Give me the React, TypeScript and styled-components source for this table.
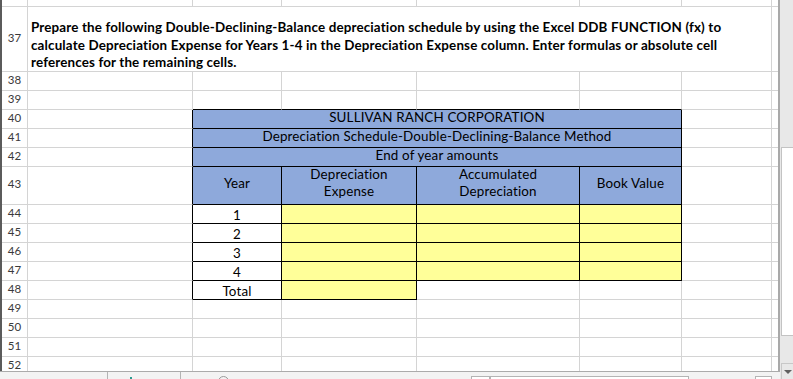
import React from 'react';
import styled, { createGlobalStyle } from 'styled-components';

const GlobalStyle = createGlobalStyle`
  html, body { margin: 0; padding: 0; background: #fff; overflow: hidden; }
  body { font-family: Lato, "Liberation Sans", sans-serif; color: #000; }
  * { box-sizing: border-box; }
`;

const GRID = '#d4d4d4';
const BLACK = '#000';
const FILLS = { blue: '#8ea9db', yellow: '#ffff99', none: '#fff' } as const;
type Fill = keyof typeof FILLS;
type VAlign = 'top' | 'center' | 'bottom';

const Window = styled.div`
  display: flex;
  width: 793px;
  height: 379px;
  overflow: hidden;
  background: #fff;
`;

const Main = styled.div`
  display: flex;
  flex-direction: column;
  width: 780px;
  flex: none;
`;

const SheetArea = styled.div`
  display: flex;
  align-items: flex-start;
  height: 371px;
  overflow: hidden;
  flex: none;
`;

const EdgeBar = styled.div`
  width: 2px;
  height: 100%;
  flex: none;
  background: #5b5b5b;
`;

const Separator = styled.div`
  width: 2px;
  height: 100%;
  flex: none;
  background: #a9a9a9;
`;

const Sheet = styled.div`
  display: grid;
  width: 776px;
  flex: none;
  grid-template-columns: 26px 165px 89px 135px 163px 102px 90px 6px;
  grid-template-rows: 7px 65px repeat(5, 19px) 38px repeat(9, 19px);
`;

const RowHead = styled.div`
  display: flex;
  align-items: center;
  justify-content: center;
  border-right: 1px solid ${GRID};
  border-bottom: 1px solid ${GRID};
  font-size: 11.5px;
  line-height: 1.2;
  color: #3a3a3a;
  padding-bottom: 3px;
`;

const JUSTIFY: Record<VAlign, string> = { top: 'flex-start', center: 'center', bottom: 'flex-end' };

const Cell = styled.div<{
  $span: number;
  $right: string;
  $bottom: string;
  $fill: Fill;
  $left?: boolean;
  $v: VAlign;
  $pt: number;
}>`
  grid-column: span ${(p) => p.$span};
  display: flex;
  flex-direction: column;
  justify-content: ${(p) => JUSTIFY[p.$v]};
  padding: ${(p) => p.$pt}px 3px ${(p) => (p.$v === 'center' ? 5 : 0)}px;
  background: ${(p) => FILLS[p.$fill]};
  border-right: ${(p) => (p.$right === 'none' ? '0' : `1px solid ${p.$right}`)};
  border-bottom: 1px solid ${(p) => p.$bottom};
  min-width: 0;
`;

const CellText = styled.div<{ $bold?: boolean; $left?: boolean; $lh: number }>`
  display: block;
  text-align: ${(p) => (p.$left ? 'left' : 'center')};
  font-size: 13.4px;
  letter-spacing: 0.15px;
  font-weight: ${(p) => (p.$bold ? 700 : 400)};
  line-height: ${(p) => p.$lh}px;
  white-space: nowrap;
`;

const Line = styled.span`
  display: block;
`;

const BottomBar = styled.div`
  display: flex;
  height: 8px;
  flex: none;
  background: #f3f3f3;
  border-top: 1px solid #ababab;
`;

const TabBox = styled.div`
  width: 108px;
  flex: none;
  border-right: 1px solid #b4b4b4;
`;

const AddMark = styled.div`
  width: 2px;
  height: 2px;
  margin: 5px 0 0 22px;
  background: #2b9a8f;
  flex: none;
`;

const TabArea = styled.div`
  width: 299px;
  margin-left: 48px;
  flex: none;
  border-left: 1px solid #b4b4b4;
  display: flex;
`;

const Circle = styled.div`
  width: 11px;
  height: 11px;
  margin: 4px 0 0 37px;
  border: 1px solid #9a9a9a;
  border-radius: 50%;
  flex: none;
`;

const HScrollBtn = styled.div<{ $w: number; $ml: number }>`
  width: ${(p) => p.$w}px;
  margin: 4px 0 0 ${(p) => p.$ml}px;
  flex: none;
  border: 1px solid #b4b4b4;
  border-bottom: 0;
  background: #fff;
`;

const VScroll = styled.div`
  width: 13px;
  flex: none;
  background: #e8e8e8;
  display: flex;
  flex-direction: column;
  padding-top: 147px;
`;

const Thumb = styled.div`
  height: 189px;
  margin-left: 1px;
  background: #fff;
  border: 1px solid #c3c3c3;
  border-right: 0;
  flex: none;
`;

const DownBtn = styled.div`
  margin-top: auto;
  height: 16px;
  margin-left: 1px;
  border: 1px solid #c8c8c8;
  border-right: 0;
  border-bottom: 0;
  display: flex;
  align-items: center;
  justify-content: center;
`;

const Arrow = styled.div`
  width: 0;
  height: 0;
  border-left: 4px solid transparent;
  border-right: 4px solid transparent;
  border-top: 4px solid #606060;
`;

type Spec = {
  span?: number;
  lines?: string[];
  fill?: Fill;
  bold?: boolean;
  left?: boolean;
  t?: boolean;
  lh?: number;
  v?: VAlign;
  pt?: number;
};

const E: Spec = {};
const empty = (): Spec[] => Array.from({ length: 7 }, () => ({}));

const yearRow = (n: string): Spec[] => [
  E,
  { lines: [n], t: true },
  { fill: 'yellow', t: true },
  { fill: 'yellow', t: true },
  { fill: 'yellow', t: true },
  E,
  E,
];

const titleRow = (text: string): Spec[] => [
  E,
  { span: 4, lines: [text], fill: 'blue', t: true, v: 'center' },
  E,
  E,
];

const ROWS: { label: string; cells: Spec[] }[] = [
  { label: '', cells: empty() },
  {
    label: '37',
    cells: [
      {
        span: 6,
        bold: true,
        left: true,
        lh: 17.5,
        v: 'top',
        pt: 12,
        lines: [
          'Prepare the following Double-Declining-Balance depreciation schedule by using the Excel DDB FUNCTION (fx) to',
          'calculate Depreciation Expense for Years 1-4 in the Depreciation Expense column. Enter formulas or absolute cell',
          'references for the remaining cells.',
        ],
      },
      E,
    ],
  },
  { label: '38', cells: empty() },
  { label: '39', cells: empty() },
  { label: '40', cells: titleRow('SULLIVAN RANCH CORPORATION') },
  { label: '41', cells: titleRow('Depreciation Schedule-Double-Declining-Balance Method') },
  { label: '42', cells: titleRow('End of year amounts') },
  {
    label: '43',
    cells: [
      E,
      { lines: ['Year'], fill: 'blue', t: true, v: 'center' },
      { lines: ['Depreciation', 'Expense'], fill: 'blue', t: true, lh: 17, v: 'center' },
      { lines: ['Accumulated', 'Depreciation'], fill: 'blue', t: true, lh: 17, v: 'center' },
      { lines: ['Book Value'], fill: 'blue', t: true, v: 'center' },
      E,
      E,
    ],
  },
  { label: '44', cells: yearRow('1') },
  { label: '45', cells: yearRow('2') },
  { label: '46', cells: yearRow('3') },
  { label: '47', cells: yearRow('4') },
  {
    label: '48',
    cells: [E, { lines: ['Total'], t: true }, { fill: 'yellow', t: true }, E, E, E, E],
  },
  { label: '49', cells: empty() },
  { label: '50', cells: empty() },
  { label: '51', cells: empty() },
  { label: '52', cells: empty() },
];

const NCOLS = 7;

// which grid columns of each row belong to the bordered table
const tableMap: boolean[][] = ROWS.map((row) => {
  const m: boolean[] = new Array(NCOLS).fill(false);
  let c = 0;
  row.cells.forEach((s) => {
    const span = s.span ?? 1;
    for (let k = 0; k < span; k++) m[c + k] = !!s.t;
    c += span;
  });
  return m;
});

const isT = (r: number, c: number) => !!(tableMap[r] && tableMap[r][c]);

export default function App() {
  return (
    <>
      <GlobalStyle />
      <Window>
        <Main>
          <SheetArea>
            <EdgeBar />
            <Sheet>
              {ROWS.map((row, r) => {
                let c = 0;
                return (
                  <React.Fragment key={r}>
                    <RowHead>{row.label}</RowHead>
                    {row.cells.map((s, i) => {
                      const span = s.span ?? 1;
                      const start = c;
                      c += span;
                      const last = start + span >= NCOLS;
                      const rightBlack = !!s.t || isT(r, start + span);
                      let belowT = false;
                      for (let k = start; k < start + span; k++) if (isT(r + 1, k)) belowT = true;
                      const bottomBlack = !!s.t || belowT;
                      return (
                        <Cell
                          key={i}
                          $span={span}
                          $right={last ? 'none' : rightBlack ? BLACK : GRID}
                          $bottom={bottomBlack ? BLACK : GRID}
                          $fill={s.fill ?? 'none'}
                          $v={s.v ?? 'bottom'}
                          $pt={s.pt ?? 0}
                        >
                          {s.lines && (
                            <CellText $bold={s.bold} $left={s.left} $lh={s.lh ?? 16}>
                              {s.lines.map((l, k) => (
                                <Line key={k}>{l}</Line>
                              ))}
                            </CellText>
                          )}
                        </Cell>
                      );
                    })}
                  </React.Fragment>
                );
              })}
            </Sheet>
            <Separator />
          </SheetArea>
          <BottomBar>
            <TabBox />
            <AddMark />
            <TabArea>
              <Circle />
            </TabArea>
            <HScrollBtn $w={19} $ml={-8} />
            <HScrollBtn $w={199} $ml={0} />
            <HScrollBtn $w={17} $ml={66} />
          </BottomBar>
        </Main>
        <VScroll>
          <Thumb />
          <DownBtn>
            <Arrow />
          </DownBtn>
        </VScroll>
      </Window>
    </>
  );
}
